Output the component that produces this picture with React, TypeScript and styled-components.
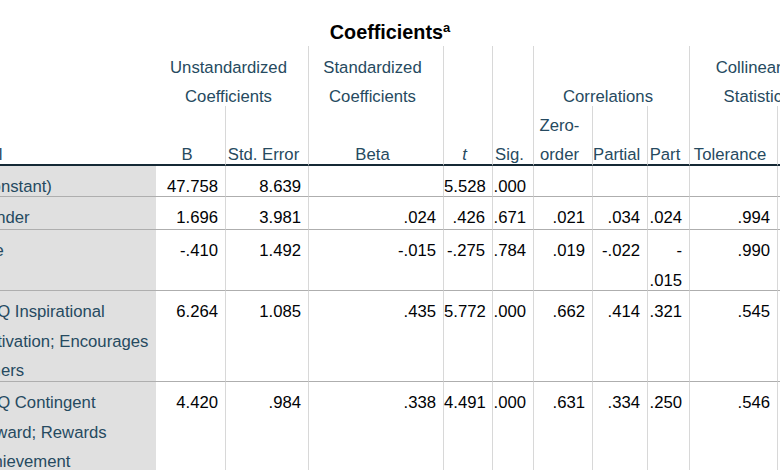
import React from 'react';
import styled, { createGlobalStyle, css } from 'styled-components';

const GlobalStyle = createGlobalStyle`
  html, body { margin: 0; padding: 0; background: #ffffff; }
  body { font-family: "Liberation Sans", Arial, Helvetica, sans-serif; }
  * { box-sizing: border-box; }
`;

/* column widths: model no., model label, B, Std. Error, Beta, t, Sig., Zero-order, Partial, Part, Tolerance, VIF */
const COLS = [17, 182, 69, 83, 135, 49, 41, 59, 55, 42, 88, 54];
/* four header lines, then five body rows */
const ROWS = [30, 30, 30, 30, 31, 33, 61, 91, 90];

const Page = styled.div`
  width: 780px;
  height: 470px;
  overflow: hidden;
  background: #ffffff;
`;

const Title = styled.h1`
  margin: 0;
  padding: 20px 0 2px;
  font-size: 19.8px;
  line-height: 24px;
  font-weight: 700;
  color: #000000;
  text-align: center;
`;

const Note = styled.sup`
  font-size: 13px;
  line-height: 0;
  vertical-align: 7px;
  font-weight: 700;
`;

const Table = styled.div`
  display: grid;
  grid-template-columns: ${COLS.map((c) => `${c}px`).join(' ')};
  grid-template-rows: ${ROWS.map((r) => `${r}px`).join(' ')};
  width: max-content;
  margin-left: -43px;
  font-size: 16.7px;
`;

type Place = {
  $col: number;
  $colSpan?: number;
  $row: number;
  $rowSpan?: number;
  $divider?: boolean;
};

const placement = css<Place>`
  grid-column: ${(p) => p.$col} / span ${(p) => p.$colSpan ?? 1};
  grid-row: ${(p) => p.$row} / span ${(p) => p.$rowSpan ?? 1};
  border-left: ${(p) => (p.$divider ? '1px solid #d8d8d8' : '0')};
`;

const HeadCell = styled.div<Place & { $align?: 'left' | 'center'; $rule?: boolean; $italic?: boolean }>`
  ${placement}
  display: flex;
  flex-direction: column;
  justify-content: flex-end;
  padding: 0 7px 0 0;
  text-align: ${(p) => p.$align ?? 'center'};
  font-style: ${(p) => (p.$italic ? 'italic' : 'normal')};
  color: #264a60;
  line-height: 29.5px;
  border-bottom: ${(p) => (p.$rule ? '2px solid #152935' : '0')};
`;

const HeadText = styled.span`
  display: block;
  margin-bottom: -5.5px;
`;

const BodyCell = styled.div<Place>`
  ${placement}
  padding: 6px 7px 0 0;
  line-height: 29.5px;
  text-align: right;
  color: #010205;
  white-space: nowrap;
  border-bottom: 1px solid #aeaeae;
`;

const LabelCell = styled(BodyCell)`
  background: #e0e0e0;
  text-align: left;
  color: #264a60;
  padding-right: 0;
`;

const ModelCell = styled(LabelCell)`
  border-bottom: 0;
`;

type Head = {
  text: string;
  col: number;
  colSpan?: number;
  row: number;
  rowSpan: number;
  divider: boolean;
  align?: 'left' | 'center';
  italic?: boolean;
};

const HEADS: Head[] = [
  { text: 'Model', col: 1, colSpan: 2, row: 1, rowSpan: 4, divider: false, align: 'left' },
  { text: 'Unstandardized Coefficients', col: 3, colSpan: 2, row: 1, rowSpan: 2, divider: false },
  { text: 'Standardized Coefficients', col: 5, row: 1, rowSpan: 2, divider: true },
  { text: 't', col: 6, row: 1, rowSpan: 4, divider: true, italic: true },
  { text: 'Sig.', col: 7, row: 1, rowSpan: 4, divider: true },
  { text: 'Correlations', col: 8, colSpan: 3, row: 1, rowSpan: 2, divider: true },
  { text: 'Collinearity Statistics', col: 11, colSpan: 2, row: 1, rowSpan: 2, divider: true },
  { text: 'B', col: 3, row: 3, rowSpan: 2, divider: false },
  { text: 'Std. Error', col: 4, row: 3, rowSpan: 2, divider: true },
  { text: 'Beta', col: 5, row: 3, rowSpan: 2, divider: true },
  { text: 'Zero-order', col: 8, row: 3, rowSpan: 2, divider: true },
  { text: 'Partial', col: 9, row: 3, rowSpan: 2, divider: true },
  { text: 'Part', col: 10, row: 3, rowSpan: 2, divider: true },
  { text: 'Tolerance', col: 11, row: 3, rowSpan: 2, divider: true },
  { text: 'VIF', col: 12, row: 3, rowSpan: 2, divider: true },
];

type Value = string | string[];

const BODY: { label: string[]; values: Value[] }[] = [
  { label: ['(Constant)'], values: ['47.758', '8.639', '', '5.528', '.000', '', '', '', '', ''] },
  { label: ['Gender'], values: ['1.696', '3.981', '.024', '.426', '.671', '.021', '.034', '.024', '.994', '1.006'] },
  { label: ['Age'], values: ['-.410', '1.492', '-.015', '-.275', '.784', '.019', '-.022', ['-', '.015'], '.990', '1.010'] },
  {
    label: ['MLQ Inspirational', 'Motivation; Encourages', 'Others'],
    values: ['6.264', '1.085', '.435', '5.772', '.000', '.662', '.414', '.321', '.545', '1.835'],
  },
  {
    label: ['MLQ Contingent', 'Reward; Rewards', 'Achievement'],
    values: ['4.420', '.984', '.338', '4.491', '.000', '.631', '.334', '.250', '.546', '1.832'],
  },
];

const Lines: React.FC<{ lines: string[] }> = ({ lines }) => (
  <>
    {lines.map((l, i) => (
      <React.Fragment key={i}>
        {i > 0 && <br />}
        {l}
      </React.Fragment>
    ))}
  </>
);

export default function App() {
  return (
    <>
      <GlobalStyle />
      <Page>
        <Title>
          Coefficients<Note>a</Note>
        </Title>
        <Table>
          {HEADS.map((h) => (
            <HeadCell
              key={h.text}
              $col={h.col}
              $colSpan={h.colSpan}
              $row={h.row}
              $rowSpan={h.rowSpan}
              $divider={h.divider}
              $align={h.align}
              $italic={h.italic}
              $rule={h.row + h.rowSpan === 5}
            >
              <HeadText>{h.text}</HeadText>
            </HeadCell>
          ))}

          <ModelCell $col={1} $row={5} $rowSpan={5}>
            1
          </ModelCell>

          {BODY.map((r, ri) => (
            <React.Fragment key={ri}>
              <LabelCell $col={2} $row={5 + ri}>
                <Lines lines={r.label} />
              </LabelCell>
              {r.values.map((v, vi) => (
                <BodyCell key={vi} $col={3 + vi} $row={5 + ri} $divider={vi > 0}>
                  <Lines lines={Array.isArray(v) ? v : [v]} />
                </BodyCell>
              ))}
            </React.Fragment>
          ))}
        </Table>
      </Page>
    </>
  );
}
